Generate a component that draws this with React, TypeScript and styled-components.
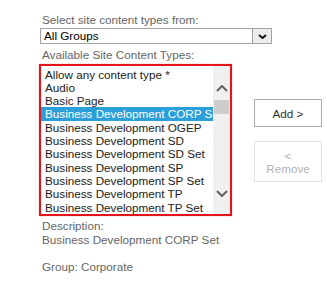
import React from 'react'
import styled, { createGlobalStyle } from 'styled-components'

const GlobalStyle = createGlobalStyle`
  body {
    margin: 0;
    background: #fff;
    font-family: 'Liberation Sans', Arial, sans-serif;
  }
`

const Page = styled.div`
  padding: 13px 0 0 40px;
  width: 327px;
  height: 284px;
  box-sizing: border-box;
  overflow: hidden;
`

const Label = styled.div<{ $top?: number }>`
  color: #666;
  font-size: 11.7px;
  line-height: 14px;
  padding-left: 2px;
  margin-top: ${({ $top }) => $top || 0}px;
`

const SelectBox = styled.div`
  width: 232px;
  height: 16px;
  box-sizing: border-box;
  border: 1px solid #a3a3a3;
  display: flex;
  margin-top: 1px;
`

const SelectValue = styled.div`
  flex: 1;
  padding-left: 3px;
  font-size: 11.7px;
  line-height: 14px;
  color: #000;
`

const DropButton = styled.div`
  width: 18px;
  border-left: 1px solid #a3a3a3;
  background: #ececec;
  display: flex;
  align-items: center;
  justify-content: center;
`

const PickRow = styled.div`
  display: flex;
  align-items: flex-start;
  margin-top: 2.5px;
  margin-left: -1px;
`

const ListBox = styled.div`
  width: 193px;
  height: 152px;
  box-sizing: border-box;
  border: 2px solid #e3151b;
  box-shadow: 0 0 1px rgba(227, 21, 27, 0.5);
  display: flex;
`

const Items = styled.div`
  flex: 1;
  overflow: hidden;
  padding-top: 1.5px;
`

const Item = styled.div<{ $selected?: boolean }>`
  height: 13.33px;
  line-height: 13.33px;
  padding-left: 4px;
  font-size: 11.7px;
  white-space: nowrap;
  color: ${({ $selected }) => ($selected ? '#fff' : '#222')};
  background: ${({ $selected }) => ($selected ? '#2b9fd9' : 'transparent')};
`

const ScrollBar = styled.div`
  width: 17px;
  background: #f0f0f0;
  display: flex;
  flex-direction: column;
  align-items: center;
  padding: 19px 0 17px;
  box-sizing: border-box;
`

const Thumb = styled.div`
  width: 15px;
  height: 14px;
  background: #cdcdcd;
  margin-top: 8px;
`

const Spacer = styled.div`
  flex: 1;
`

const ButtonCol = styled.div`
  display: flex;
  flex-direction: column;
  gap: 14px;
  margin: 35px 0 0 22px;
`

const ActionButton = styled.div<{ $disabled?: boolean; $h: number }>`
  width: 68px;
  height: ${({ $h }) => $h}px;
  box-sizing: border-box;
  border: 1px solid ${({ $disabled }) => ($disabled ? '#e1e1e1' : '#ababab')};
  color: ${({ $disabled }) => ($disabled ? '#b1b1b1' : '#333')};
  font-size: 11.7px;
  line-height: 13px;
  display: flex;
  flex-direction: column;
  align-items: center;
  justify-content: center;
  text-align: center;
`

const Desc = styled.div`
  color: #666;
  font-size: 11.7px;
  line-height: 14px;
  padding-left: 2px;
  margin-top: 3px;
`

const Group = styled.div`
  margin-top: 13px;
`

const Chevron = ({ up, w, h, color }: { up?: boolean; w: number; h: number; color: string }) => (
  <svg width={w} height={h} viewBox={`0 0 ${w} ${h}`}>
    <polyline
      points={up ? `1,${h - 1} ${w / 2},1 ${w - 1},${h - 1}` : `1,1 ${w / 2},${h - 1} ${w - 1},1`}
      fill="none"
      stroke={color}
      strokeWidth="2"
    />
  </svg>
)

const items = [
  'Allow any content type *',
  'Audio',
  'Basic Page',
  'Business Development CORP Set',
  'Business Development OGEP',
  'Business Development SD',
  'Business Development SD Set',
  'Business Development SP',
  'Business Development SP Set',
  'Business Development TP',
  'Business Development TP Set',
]

export default function App() {
  return (
    <>
      <GlobalStyle />
      <Page>
        <Label>Select site content types from:</Label>
        <SelectBox>
          <SelectValue>All Groups</SelectValue>
          <DropButton>
            <Chevron w={9} h={5} color="#111" />
          </DropButton>
        </SelectBox>
        <Label $top={3.5}>Available Site Content Types:</Label>
        <PickRow>
          <ListBox>
            <Items>
              {items.map((it, i) => (
                <Item key={it} $selected={i === 3}>
                  {it}
                </Item>
              ))}
            </Items>
            <ScrollBar>
              <Chevron up w={12} h={7} color="#606060" />
              <Thumb />
              <Spacer />
              <Chevron w={12} h={7} color="#606060" />
            </ScrollBar>
          </ListBox>
          <ButtonCol>
            <ActionButton $h={28}>Add &gt;</ActionButton>
            <ActionButton $h={41} $disabled>
              <span>&lt;</span>
              <span>Remove</span>
            </ActionButton>
          </ButtonCol>
        </PickRow>
        <Desc>
          Description:
          <br />
          Business Development CORP Set
          <Group>Group: Corporate</Group>
        </Desc>
      </Page>
    </>
  )
}
